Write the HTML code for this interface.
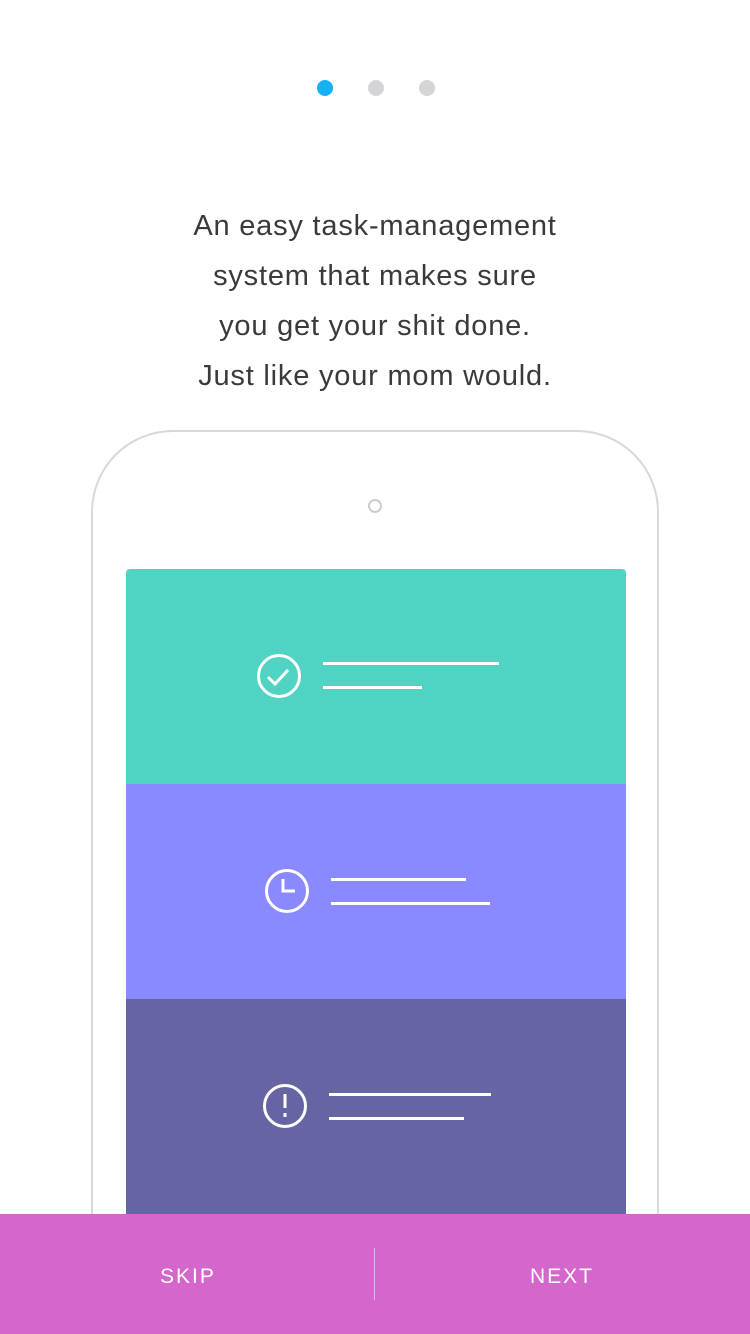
<!DOCTYPE html>
<html><head><meta charset="utf-8"><style>
html,body{margin:0;width:750px;height:1334px;overflow:hidden}
body{position:relative;background:#fff;font-family:"Liberation Sans",sans-serif}
.dot{position:absolute;top:80px;width:16px;height:16px;border-radius:50%;background:#d5d5d8}
.txt{position:absolute;top:201px;left:0;width:750px;text-align:center;font-size:29px;line-height:50px;color:#3a3a3a;font-weight:300;letter-spacing:0.8px}
.phone{position:absolute;left:91px;top:430px;width:564px;height:860px;border:2px solid #d8d8d8;border-radius:82px}
.cam{position:absolute;left:368px;top:499px;width:10px;height:10px;border:2px solid #ccc;border-radius:50%}
.row{position:absolute;left:126px;width:500px;height:215px}
.bar{position:absolute;top:1214px;left:0;width:750px;height:120px;background:#d567cc;color:#fff;font-size:21px;letter-spacing:2px}
.bar span{position:absolute;top:51px}
.l{position:absolute;height:3px;background:#fff}
</style></head><body>
<div class="dot" style="left:317px;background:#12b2f4"></div>
<div class="dot" style="left:368px"></div>
<div class="dot" style="left:419px"></div>
<div class="txt">An easy task-management<br>system that makes sure<br>you get your shit done.<br>Just like your mom would.</div>
<div class="phone"></div>
<div class="cam"></div>
<div class="row" style="top:569px;background:#51d3c4;border-radius:4px 4px 0 0"></div>
<div class="row" style="top:784px;background:#8b89ff"></div>
<div class="row" style="top:999px;background:#6664a3"></div>
<svg style="position:absolute;left:0;top:0" width="750" height="1334" fill="none" stroke="#fff" stroke-width="3">
<circle cx="279" cy="676" r="20.5"/><path d="M268 677l7 7 13-14"/>
<circle cx="287" cy="891" r="20.5"/><path d="M283 879v12h12"/>
<circle cx="285" cy="1106" r="20.5"/><path d="M285 1094v14M285 1113v4"/>
</svg>
<div class="l" style="left:323px;top:662px;width:176px"></div>
<div class="l" style="left:323px;top:686px;width:99px"></div>
<div class="l" style="left:331px;top:878px;width:135px"></div>
<div class="l" style="left:331px;top:902px;width:159px"></div>
<div class="l" style="left:329px;top:1093px;width:162px"></div>
<div class="l" style="left:329px;top:1117px;width:135px"></div>
<div class="bar"><span style="left:160px">SKIP</span><span style="left:530px">NEXT</span>
<div style="position:absolute;left:374px;top:34px;width:1px;height:52px;background:rgba(255,255,255,.5)"></div></div>
</body></html>
